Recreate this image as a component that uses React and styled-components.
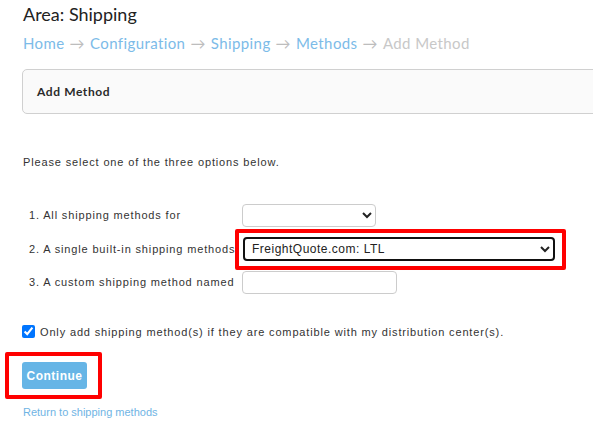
import React from 'react';
import styled, { createGlobalStyle } from 'styled-components';

const GlobalStyle = createGlobalStyle`
  html, body {
    margin: 0;
    padding: 0;
    background: #fff;
    overflow: hidden;
  }
`;

const Page = styled.div`
  padding: 0 0 0 22px;
  width: 620px;
  font-family: 'Liberation Sans', Arial, sans-serif;
  color: #333;
`;

const Title = styled.h1`
  font-family: Lato, 'Open Sans', sans-serif;
  font-weight: 400;
  font-size: 18px;
  line-height: 22px;
  color: #222;
  margin: 3px 0 0 1px;
`;

const Crumbs = styled.nav`
  display: flex;
  gap: 5px;
  margin: 8px 0 0 1px;
  font-family: Lato, 'Open Sans', sans-serif;
  font-size: 15px;
  line-height: 20px;
  letter-spacing: 0.4px;
`;

const Crumb = styled.a`
  color: ${(p) => (p.$current ? '#c8c8c8' : '#7cbbe8')};
  text-decoration: none;
`;

const Arrow = styled.span`
  color: #bdbdbd;
`;

const Panel = styled.div`
  margin-top: 16px;
  height: 43px;
  display: flex;
  align-items: center;
  padding-left: 14px;
  border: 1px solid #d0d0d0;
  border-radius: 5px;
  background: #fafafa;
  font-family: Lato, 'Open Sans', sans-serif;
  font-weight: 700;
  font-size: 12px;
  letter-spacing: 0.6px;
  color: #2a2a2a;
`;

const Intro = styled.p`
  margin: 41px 0 0 1px;
  font-size: 11px;
  line-height: 14px;
  letter-spacing: 0.85px;
`;

const Options = styled.div`
  display: grid;
  grid-template-columns: 213px auto;
  grid-template-rows: 34px 33px 34px;
  align-items: center;
  margin: 29px 0 0 7px;
  font-size: 11px;
  letter-spacing: 0.85px;
`;

const Label = styled.span`
  white-space: nowrap;
`;

const Control = styled.div`
  display: flex;
  align-items: center;
`;

const Marked = styled.div`
  position: relative;
  display: inline-flex;

  &::after {
    content: '';
    position: absolute;
    top: ${(p) => p.$t}px;
    bottom: ${(p) => p.$b}px;
    left: ${(p) => p.$l}px;
    right: ${(p) => p.$r}px;
    border: 4px solid #f00;
    border-radius: 2px;
    pointer-events: none;
  }
`;

const Select = styled.select`
  width: ${(p) => p.$w}px;
  height: ${(p) => (p.$focus ? 24 : 23)}px;
  margin-left: ${(p) => (p.$focus ? 1 : 0)}px;
  border: ${(p) => (p.$focus ? '2px solid #111' : '1px solid #ccc')};
  border-radius: 4px;
  background: #fff;
  font-family: 'Liberation Sans', Arial, sans-serif;
  font-size: 12px;
  letter-spacing: 0.5px;
  color: #222;
  padding: 0 3px;
`;

const TextInput = styled.input`
  width: 155px;
  height: 23px;
  box-sizing: border-box;
  border: 1px solid #ccc;
  border-radius: 4px;
  padding: 0 4px;
`;

const CheckRow = styled.label`
  display: flex;
  align-items: center;
  gap: 5px;
  margin: 26px 0 0 0;
  font-size: 11px;
  letter-spacing: 0.85px;
`;

const Check = styled.input`
  width: 13px;
  height: 13px;
  margin: 0;
  accent-color: #0075ff;
`;

const ButtonWrap = styled.div`
  margin-top: 24px;
  display: flex;
`;

const Button = styled.button`
  width: 65px;
  height: 27px;
  border: none;
  border-radius: 3px;
  background: #66b5e6;
  color: #fff;
  font-family: 'Liberation Sans', Arial, sans-serif;
  font-weight: 700;
  font-size: 12px;
  letter-spacing: 0.5px;
  padding: 0;
`;

const BackLink = styled.a`
  display: block;
  margin: 17px 0 0 1px;
  font-size: 11px;
  color: #6fb4e4;
  text-decoration: none;
`;

const crumbs = ['Home', 'Configuration', 'Shipping', 'Methods'];

export default function App() {
  return (
    <>
      <GlobalStyle />
      <Page>
        <Title>Area: Shipping</Title>
        <Crumbs>
          {crumbs.map((c) => (
            <React.Fragment key={c}>
              <Crumb href="#">{c}</Crumb>
              <Arrow>→</Arrow>
            </React.Fragment>
          ))}
          <Crumb $current>Add Method</Crumb>
        </Crumbs>
        <Panel>Add Method</Panel>
        <Intro>Please select one of the three options below.</Intro>
        <Options>
          <Label>1. All shipping methods for</Label>
          <Control>
            <Select $w={134}>
              <option></option>
            </Select>
          </Control>
          <Label>2. A single built-in shipping methods</Label>
          <Control>
            <Marked $t={-8} $b={-9} $l={-7} $r={-11}>
              <Select $w={312} $focus>
                <option>FreightQuote.com: LTL</option>
              </Select>
            </Marked>
          </Control>
          <Label>3. A custom shipping method named</Label>
          <Control>
            <TextInput type="text" />
          </Control>
        </Options>
        <CheckRow>
          <Check type="checkbox" defaultChecked />
          Only add shipping method(s) if they are compatible with my distribution center(s).
        </CheckRow>
        <ButtonWrap>
          <Marked $t={-10} $b={-10} $l={-17} $r={-15}>
            <Button>Continue</Button>
          </Marked>
        </ButtonWrap>
        <BackLink href="#">Return to shipping methods</BackLink>
      </Page>
    </>
  );
}
